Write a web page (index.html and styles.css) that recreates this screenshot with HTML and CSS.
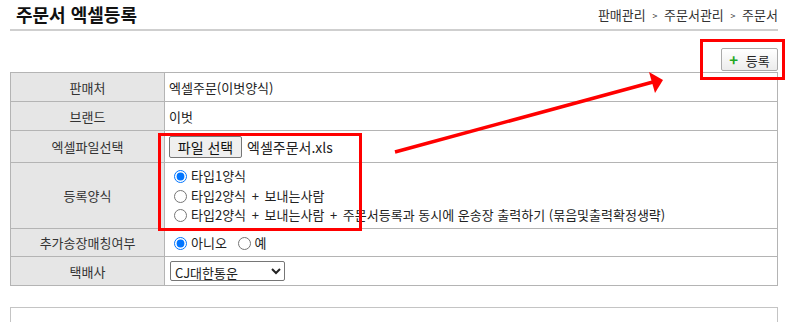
FILE: index.html
```html
<!DOCTYPE html>
<html lang="ko">
<head>
  <meta charset="UTF-8">
  <meta name="viewport" content="width=device-width, initial-scale=1.0">
  <title>주문서 엑셀등록</title>
  <link rel="stylesheet" href="styles.css">
</head>
<body>
  <div class="wrap">
    <!-- Page title -->
    <div class="page-head">
      <h1>주문서 엑셀등록</h1>
      <div class="crumbs">판매관리 <span class="gt">&gt;</span> 주문서관리 <span class="gt">&gt;</span> 주문서</div>
    </div>

    <!-- Toolbar -->
    <div class="toolbar">
      <button type="button" class="btn-add"><span class="plus">+</span> 등록</button>
    </div>

    <!-- Upload form -->
    <table class="form-table">
      <tr class="r1">
        <th>판매처</th>
        <td>엑셀주문(이벗양식)</td>
      </tr>
      <tr class="r2">
        <th>브랜드</th>
        <td>이벗</td>
      </tr>
      <tr class="r3">
        <th>엑셀파일선택</th>
        <td>
          <div class="file-row">
            <button type="button" class="btn-file">파일 선택</button>
            <span class="file-name">엑셀주문서.xls</span>
          </div>
        </td>
      </tr>
      <tr class="r4">
        <th>등록양식</th>
        <td>
          <label class="opt"><input type="radio" name="form" checked>타입1양식</label>
          <label class="opt"><input type="radio" name="form">타입2양식 <span class="sep">+</span> 보내는사람</label>
          <label class="opt"><input type="radio" name="form">타입2양식 <span class="sep">+</span> 보내는사람 <span class="sep">+</span> 주문서등록과 동시에 운송장 출력하기 (묶음및출력확정생략)</label>
        </td>
      </tr>
      <tr class="r5">
        <th>추가송장매칭여부</th>
        <td>
          <label class="inline"><input type="radio" name="match" checked>아니오</label>
          <label class="inline"><input type="radio" name="match">예</label>
        </td>
      </tr>
      <tr class="r6">
        <th>택배사</th>
        <td>
          <select class="courier">
            <option>CJ대한통운</option>
          </select>
        </td>
      </tr>
    </table>

    <div class="result-box"></div>
  </div>

  <!-- Annotations -->
  <div class="mark mark-btn"></div>
  <div class="mark mark-form"></div>
  <svg class="arrow" width="789" height="322" viewBox="0 0 789 322">
    <line x1="395" y1="152" x2="653" y2="82" stroke="#ff0000" stroke-width="3.5"/>
    <polygon points="649,72 663,80 655,93" fill="#ff0000"/>
  </svg>
</body>
</html>
```

FILE: styles.css
```css
body {
  margin: 0;
  font-family: "Noto Sans CJK KR", "Noto Sans", sans-serif;
  font-size: 13px;
  color: #222;
  background: #fff;
  overflow: hidden;
}

.wrap {
  padding: 0 11px 0 10px;
}

.page-head {
  display: flex;
  justify-content: space-between;
  align-items: center;
  height: 29px;
  border-bottom: 2px solid #cfcfcf;
}

.page-head h1 {
  margin: 0 0 0 6px;
  font-size: 18px;
  font-weight: bold;
  color: #111;
  line-height: 29px;
}

.crumbs {
  font-size: 13px;
  color: #333;
}

.crumbs .gt {
  font-size: 9px;
  vertical-align: 1px;
  margin: 0 3px;
}

.toolbar {
  display: flex;
  justify-content: flex-end;
  padding: 17px 0 1px;
}

.btn-add {
  height: 23px;
  width: 57px;
  padding: 0;
  font-family: inherit;
  font-size: 13px;
  color: #222;
  background: linear-gradient(#ffffff, #ececec);
  border: 1px solid #aaa;
  border-radius: 2px;
  cursor: pointer;
}

.btn-add .plus {
  color: #22a822;
  font-weight: bold;
  font-size: 15px;
  margin-right: 4px;
}

.form-table {
  width: 768px;
  border-collapse: collapse;
  border: 1px solid #b4b4b4;
}

.form-table th,
.form-table td {
  border: 1px solid #b4b4b4;
  padding: 0 4px;
}

.form-table th {
  width: 145px;
  background: #e6e6e6;
  font-weight: normal;
  color: #333;
  text-align: center;
}

.form-table td {
  color: #222;
}

.r1 { height: 29px; }
.r2 { height: 29px; }
.r3 { height: 32px; }
.r4 { height: 66px; }
.r5 { height: 28px; }
.r6 { height: 29px; }

.file-row {
  display: flex;
  align-items: center;
  gap: 5px;
}

.btn-file {
  height: 22px;
  width: 73px;
  padding: 0;
  font-family: inherit;
  font-size: 14px;
  color: #111;
  background: #efefef;
  border: 1px solid #767676;
  border-radius: 2px;
}

.file-name {
  font-size: 14px;
}

.opt {
  display: block;
  line-height: 19.5px;
}

.opt .sep {
  margin: 0 2px;
}

.opt input,
.inline input {
  margin: 0 4px 0 5px;
  vertical-align: -2px;
}

.inline {
  margin-right: 2px;
}

.courier {
  width: 115px;
  height: 20px;
  font-family: inherit;
  font-size: 13px;
  color: #222;
  border: 1px solid #767676;
  border-radius: 2px;
  background: #fff;
  margin-left: 1px;
}

.result-box {
  margin-top: 21px;
  height: 14px;
  border: 1px solid #c4c4c4;
  border-bottom: none;
}

.mark {
  position: absolute;
  border: 3px solid #ff0000;
  box-sizing: border-box;
  pointer-events: none;
}

.mark-btn {
  left: 700px;
  top: 39px;
  width: 85px;
  height: 41px;
}

.mark-form {
  left: 158px;
  top: 133px;
  width: 204px;
  height: 98px;
}

.arrow {
  position: absolute;
  left: 0;
  top: 0;
  pointer-events: none;
}
```
